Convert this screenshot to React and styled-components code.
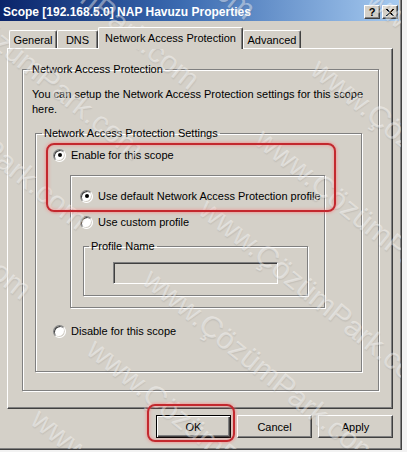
import React from 'react'
import styled, { createGlobalStyle } from 'styled-components'

const GlobalStyle = createGlobalStyle`
  html, body {
    margin: 0;
    padding: 0;
    background: #f2f2f2;
  }
  body {
    font-family: "Liberation Sans", Arial, sans-serif;
    font-size: 11px;
    color: #000;
  }
`

const Window = styled.div`
  position: relative;
  width: 402px;
  height: 450px;
  box-sizing: border-box;
  background: #d4d0c8;
  border-right: 1px solid #404040;
  border-bottom: 1px solid #404040;
  box-shadow: inset -1px -1px 0 #808080;
  display: flex;
  flex-direction: column;
`

const TitleBar = styled.div`
  height: 21px;
  margin-right: 2px;
  box-sizing: border-box;
  padding: 3px 1px 0 3px;
  display: flex;
  align-items: center;
  background: linear-gradient(to right, #0a246a, #3a6ab0 45%, #a6caf0);
`

const Title = styled.div`
  flex: 1;
  color: #fff;
  font-weight: bold;
  font-size: 12px;
  white-space: nowrap;
`

const CaptionButton = styled.div`
  width: 16px;
  height: 14px;
  box-sizing: border-box;
  margin-left: ${({ $gap }) => $gap || 0}px;
  background: #d4d0c8;
  border: 1px solid;
  border-color: #fff #404040 #404040 #fff;
  box-shadow: inset -1px -1px 0 #808080;
  display: flex;
  align-items: center;
  justify-content: center;
  font-weight: bold;
  font-size: 11px;
  line-height: 1;
`

const Body = styled.div`
  padding-left: 7px;
  display: flex;
  flex-direction: column;
`

const TabRow = styled.div`
  height: 27px;
  margin-left: 2px;
  display: flex;
  align-items: flex-end;
`

const Tab = styled.div`
  position: relative;
  z-index: ${({ $active }) => ($active ? 2 : 1)};
  width: ${({ $width }) => $width}px;
  height: ${({ $active }) => ($active ? 22 : 18)}px;
  margin-bottom: ${({ $active }) => ($active ? -1 : 0)}px;
  box-sizing: border-box;
  background: #d4d0c8;
  border-top: 1px solid #fff;
  border-left: 1px solid #fff;
  border-right: 1px solid #404040;
  border-radius: 2px 2px 0 0;
  box-shadow: inset -1px 0 0 #808080;
  display: flex;
  align-items: center;
  justify-content: center;
  padding-bottom: ${({ $active }) => ($active ? 2 : 0)}px;
  white-space: nowrap;
`

const Panel = styled.div`
  width: 386px;
  height: 361px;
  box-sizing: border-box;
  border-top: 1px solid #fff;
  border-left: 1px solid #fff;
  border-right: 1px solid #404040;
  border-bottom: 1px solid #404040;
  box-shadow: inset -1px -1px 0 #808080;
  padding: 13px 0 0 14px;
`

const Group = styled.fieldset`
  width: ${({ $width }) => $width}px;
  height: ${({ $height }) => $height}px;
  box-sizing: border-box;
  margin: ${({ $margin }) => $margin || 0};
  padding: ${({ $padding }) => $padding || 0};
  border: 1px solid #808080;
  box-shadow: 1px 1px 0 #fff, inset 1px 1px 0 #fff;
  min-width: 0;
`

const Legend = styled.legend`
  padding: 0 2px;
  margin-left: -2px;
  line-height: 14px;
  font-size: 11px;
`

const EtchedBox = styled.div`
  width: 255px;
  height: 133px;
  box-sizing: border-box;
  margin: 13px 0 0 26px;
  padding: 13px 0 0 9px;
  border: 1px solid #808080;
  box-shadow: 1px 1px 0 #fff, inset 1px 1px 0 #fff;
`

const Description = styled.div`
  width: 346px;
  line-height: 15px;
`

const RadioRow = styled.div`
  height: 14px;
  margin: ${({ $margin }) => $margin || 0};
  display: flex;
  align-items: center;
  gap: 5px;
  white-space: nowrap;
`

const RadioCircle = styled.span`
  width: 13px;
  height: 13px;
  box-sizing: border-box;
  border-radius: 50%;
  background: #fff;
  border: 1px solid;
  border-color: #808080 #fff #fff #808080;
  box-shadow: inset 1px 1px 0 #404040, inset -1px -1px 0 #d4d0c8;
  display: flex;
  align-items: center;
  justify-content: center;
  flex-shrink: 0;

  &::after {
    content: '';
    display: ${({ $checked }) => ($checked ? 'block' : 'none')};
    width: 4px;
    height: 4px;
    border-radius: 50%;
    background: #000;
  }
`

const TextField = styled.div`
  width: 165px;
  height: 22px;
  margin-left: 22px;
  box-sizing: border-box;
  background: #d4d0c8;
  border: 1px solid;
  border-color: #808080 #fff #fff #808080;
  box-shadow: inset 1px 1px 0 #404040, inset -1px -1px 0 #d4d0c8;
`

const ButtonRow = styled.div`
  width: 386px;
  margin-top: 6px;
  display: flex;
  justify-content: flex-end;
  gap: 6px;
`

const Button = styled.div`
  width: 75px;
  height: 23px;
  box-sizing: border-box;
  background: #d4d0c8;
  border: 1px solid;
  border-color: ${({ $default }) =>
    $default ? '#000' : '#fff #404040 #404040 #fff'};
  box-shadow: ${({ $default }) =>
    $default
      ? 'inset 1px 1px 0 #fff, inset -1px -1px 0 #404040, inset -2px -2px 0 #808080'
      : 'inset -1px -1px 0 #808080'};
  display: flex;
  align-items: center;
  justify-content: center;
`

const Highlight = styled.div`
  position: absolute;
  left: ${({ $x }) => $x}px;
  top: ${({ $y }) => $y}px;
  width: ${({ $w }) => $w}px;
  height: ${({ $h }) => $h}px;
  box-sizing: border-box;
  border: 2px solid #c3282e;
  border-radius: 8px;
  box-shadow: 0 0 3px 1px rgba(255, 120, 120, 0.55),
    inset 0 0 3px 1px rgba(255, 120, 120, 0.45);
  pointer-events: none;
`

// faint diagonal site watermark lying over the whole dialog
const WatermarkLayer = styled.div`
  position: absolute;
  inset: 0;
  overflow: hidden;
  pointer-events: none;
`

const WatermarkLine = styled.div`
  position: absolute;
  left: ${({ $x }) => $x}px;
  top: ${({ $y }) => $y}px;
  transform: rotate(39deg);
  transform-origin: 0 0;
  display: flex;
  gap: 82px;
  white-space: nowrap;
  font-size: 30px;
  line-height: 1;
  color: rgba(255, 255, 255, 0.42);
  text-shadow: 1px 1px 1px rgba(90, 90, 90, 0.12);
`

const Radio = ({ checked, label, margin }) => (
  <RadioRow $margin={margin}>
    <RadioCircle $checked={checked} />
    <span>{label}</span>
  </RadioRow>
)

const CloseGlyph = () => (
  <svg width="8" height="7" viewBox="0 0 8 7">
    <path d="M0 0h2v1h1v1h2V1h1V0h2v1H7v1H6v1H5v1h1v1h1v1h1v1H6V6H5V5H3v1H2v1H0V6h1V5h1V4h1V3H2V2H1V1H0z" fill="#000" />
  </svg>
)

const tabs = [
  { label: 'General', width: 48 },
  { label: 'DNS', width: 41 },
  { label: 'Network Access Protection', width: 145, active: true },
  { label: 'Advanced', width: 58 }
]

// each line starts one repeat before the visible "www." so text runs in from the edge
const watermarkLines = [-2, -1, 0, 1, 2, 3, 4].map((k) => ({
  x: 293 - 56 * k - 316,
  y: 143 + 70 * k - 256
}))

const WATERMARK = 'www.ÇözümPark.com'

const App = () => {
  return (
    <>
      <GlobalStyle />
      <Window>
        <TitleBar>
          <Title>Scope [192.168.5.0] NAP Havuzu Properties</Title>
          <CaptionButton>?</CaptionButton>
          <CaptionButton $gap={2}>
            <CloseGlyph />
          </CaptionButton>
        </TitleBar>
        <Body>
          <TabRow>
            {tabs.map((t) => (
              <Tab key={t.label} $width={t.width} $active={t.active}>
                {t.label}
              </Tab>
            ))}
          </TabRow>
          <Panel>
            <Group $width={357} $height={329} $padding="11px 0 0 9px">
              <Legend>Network Access Protection</Legend>
              <Description>
                You can setup the Network Access Protection settings for this scope here.
              </Description>
              <Group $width={327} $height={246} $margin="9px 0 0 3px" $padding="8px 0 0 8px">
                <Legend>Network Access Protection Settings</Legend>
                <Radio checked label="Enable for this scope" margin="0 0 0 9px" />
                <EtchedBox>
                  <Radio checked label="Use default Network Access Protection profile" />
                  <Radio label="Use custom profile" margin="12px 0 0 0" />
                  <Group $width={225} $height={57} $margin="10px 0 0 3px" $padding="9px 0 0 7px">
                    <Legend>Profile Name</Legend>
                    <TextField />
                  </Group>
                </EtchedBox>
                <Radio label="Disable for this scope" margin="16px 0 0 9px" />
              </Group>
            </Group>
          </Panel>
          <ButtonRow>
            <Button $default>OK</Button>
            <Button>Cancel</Button>
            <Button>Apply</Button>
          </ButtonRow>
        </Body>
        <WatermarkLayer aria-hidden="true">
          {watermarkLines.map((l, i) => (
            <WatermarkLine key={i} $x={l.x} $y={l.y}>
              <span>{WATERMARK}</span>
              <span>{WATERMARK}</span>
              <span>{WATERMARK}</span>
            </WatermarkLine>
          ))}
        </WatermarkLayer>
        <Highlight $x={46} $y={143} $w={290} $h={69} />
        <Highlight $x={147} $y={404} $w={88} $h={38} />
      </Window>
    </>
  )
}

export default App
